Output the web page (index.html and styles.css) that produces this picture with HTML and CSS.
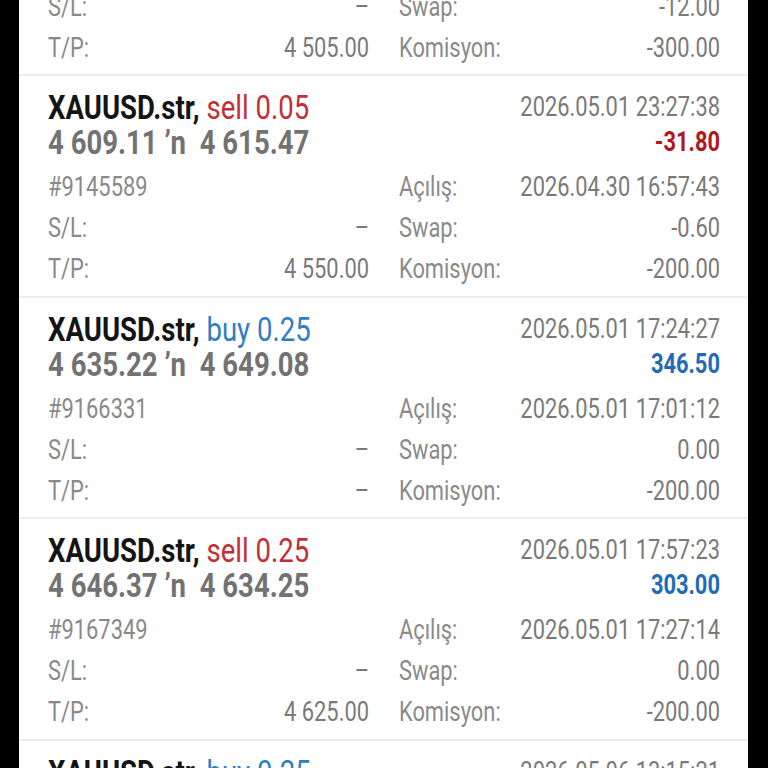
FILE: index.html
```html
<!DOCTYPE html>
<html lang="tr">
<head>
<meta charset="utf-8">
<title>Geçmiş</title>
<link rel="stylesheet" href="styles.css">
</head>
<body>
<div class="frame">
<div class="screen">
  <div class="list">
    <section class="card">
      <div class="head">
        <div class="title"><b>XAUUSD.str,</b> <span class="sell">sell 0.10</span></div>
        <div class="date">2026.05.01 22:10:05</div>
      </div>
      <div class="head">
        <div class="prices">4 612.40 ’n  4 505.00</div>
        <div class="profit neg">-1 074.00</div>
      </div>
      <div class="grid">
        <div class="cell"><span class="lbl">#9139012</span></div>
        <div class="cell"><span class="lbl">Açılış:</span><span class="val">2026.04.30 14:02:11</span></div>
        <div class="cell"><span class="lbl">S/L:</span><span class="val">–</span></div>
        <div class="cell"><span class="lbl">Swap:</span><span class="val">-12.00</span></div>
        <div class="cell"><span class="lbl">T/P:</span><span class="val">4 505.00</span></div>
        <div class="cell"><span class="lbl">Komisyon:</span><span class="val">-300.00</span></div>
      </div>
    </section>

    <section class="card">
      <div class="head">
        <div class="title"><b>XAUUSD.str,</b> <span class="sell">sell 0.05</span></div>
        <div class="date">2026.05.01 23:27:38</div>
      </div>
      <div class="head">
        <div class="prices">4 609.11 ’n  4 615.47</div>
        <div class="profit neg">-31.80</div>
      </div>
      <div class="grid">
        <div class="cell"><span class="lbl">#9145589</span></div>
        <div class="cell"><span class="lbl">Açılış:</span><span class="val">2026.04.30 16:57:43</span></div>
        <div class="cell"><span class="lbl">S/L:</span><span class="val">–</span></div>
        <div class="cell"><span class="lbl">Swap:</span><span class="val">-0.60</span></div>
        <div class="cell"><span class="lbl">T/P:</span><span class="val">4 550.00</span></div>
        <div class="cell"><span class="lbl">Komisyon:</span><span class="val">-200.00</span></div>
      </div>
    </section>

    <section class="card">
      <div class="head">
        <div class="title"><b>XAUUSD.str,</b> <span class="buy">buy 0.25</span></div>
        <div class="date">2026.05.01 17:24:27</div>
      </div>
      <div class="head">
        <div class="prices">4 635.22 ’n  4 649.08</div>
        <div class="profit pos">346.50</div>
      </div>
      <div class="grid">
        <div class="cell"><span class="lbl">#9166331</span></div>
        <div class="cell"><span class="lbl">Açılış:</span><span class="val">2026.05.01 17:01:12</span></div>
        <div class="cell"><span class="lbl">S/L:</span><span class="val">–</span></div>
        <div class="cell"><span class="lbl">Swap:</span><span class="val">0.00</span></div>
        <div class="cell"><span class="lbl">T/P:</span><span class="val">–</span></div>
        <div class="cell"><span class="lbl">Komisyon:</span><span class="val">-200.00</span></div>
      </div>
    </section>

    <section class="card">
      <div class="head">
        <div class="title"><b>XAUUSD.str,</b> <span class="sell">sell 0.25</span></div>
        <div class="date">2026.05.01 17:57:23</div>
      </div>
      <div class="head">
        <div class="prices">4 646.37 ’n  4 634.25</div>
        <div class="profit pos">303.00</div>
      </div>
      <div class="grid">
        <div class="cell"><span class="lbl">#9167349</span></div>
        <div class="cell"><span class="lbl">Açılış:</span><span class="val">2026.05.01 17:27:14</span></div>
        <div class="cell"><span class="lbl">S/L:</span><span class="val">–</span></div>
        <div class="cell"><span class="lbl">Swap:</span><span class="val">0.00</span></div>
        <div class="cell"><span class="lbl">T/P:</span><span class="val">4 625.00</span></div>
        <div class="cell"><span class="lbl">Komisyon:</span><span class="val">-200.00</span></div>
      </div>
    </section>

    <section class="card">
      <div class="head">
        <div class="title"><b>XAUUSD.str,</b> <span class="buy">buy 0.25</span></div>
        <div class="date">2026.05.06 13:15:21</div>
      </div>
      <div class="head">
        <div class="prices">4 688.10 ’n  4 701.55</div>
        <div class="profit pos">336.25</div>
      </div>
    </section>
  </div>
</div>
</div>
</body>
</html>
```

FILE: styles.css
```css
html, body {
  margin: 0;
  padding: 0;
  background: #000;
  height: 100%;
  overflow: hidden;
}

.frame {
  width: 729px;
  height: 768px;
  margin-left: 19px;
  overflow: hidden;
  background: #fff;
}

/* laid out wide, then condensed horizontally to mimic a condensed face */
.screen {
  width: 900px;
  height: 768px;
  overflow: hidden;
  transform: scaleX(0.81);
  transform-origin: 0 0;
  font-family: Roboto, "Liberation Sans", sans-serif;
  font-size: 27px;
}

.list {
  margin-top: -147.5px;
}

.card {
  border-top: 2px solid #ededed;
  padding: 14px 34.6px 5.5px 35.8px;
}

.head {
  display: flex;
  justify-content: space-between;
  align-items: center;
  height: 35px;
  line-height: 35px;
  white-space: pre;
}

.title {
  color: #141414;
  font-size: 34px;
}

.title b {
  font-weight: 700;
}

.sell { color: #c22f36; }
.buy { color: #2f7ec4; }

.date {
  color: #7a7a7a;
}

.prices {
  color: #727272;
  font-weight: 700;
  font-size: 34px;
}

.profit {
  font-weight: 700;
}

.neg { color: #b3151d; }
.pos { color: #1f6cb6; }

.grid {
  display: grid;
  grid-template-columns: 1fr 1fr;
  column-gap: 37px;
  margin-top: 7px;
}

.cell {
  display: flex;
  justify-content: space-between;
  align-items: center;
  height: 41px;
  line-height: 41px;
  white-space: nowrap;
}

.lbl {
  color: #8a8a8a;
}

.val {
  color: #7a7a7a;
}
```
